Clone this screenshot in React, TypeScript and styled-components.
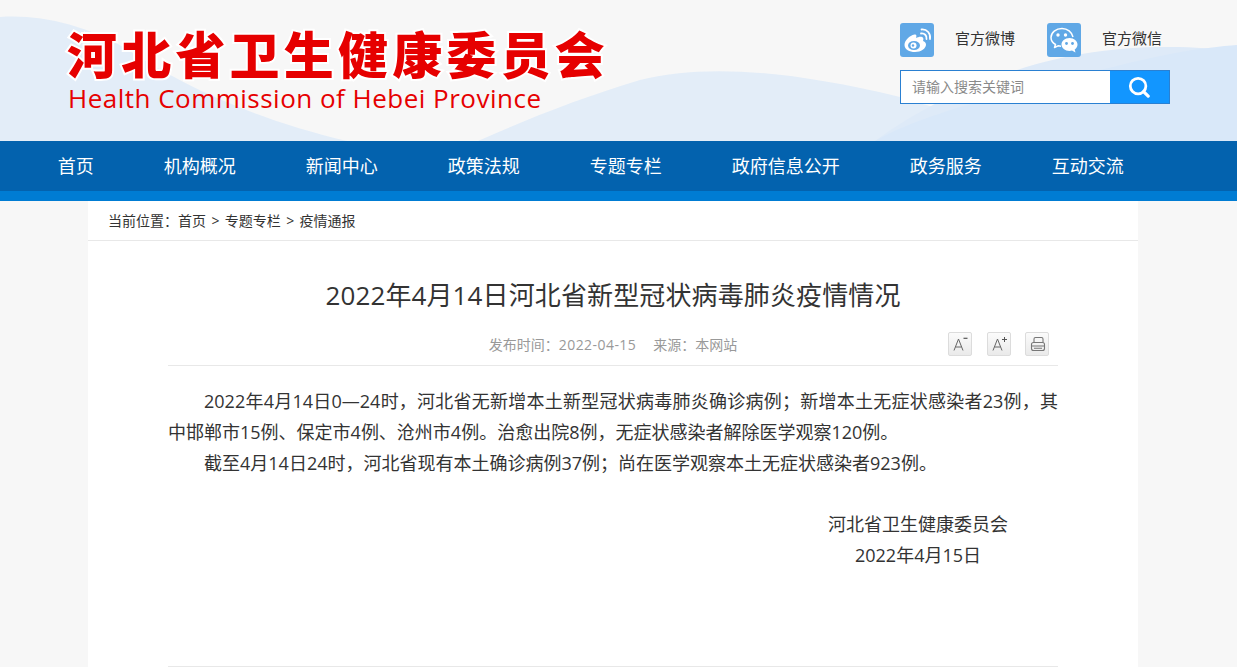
import React from "react";
import styled, { createGlobalStyle } from "styled-components";

const Global = createGlobalStyle`
  html, body { margin: 0; padding: 0; background: #f7f7f7; }
  body { font-family: "Open Sans", "Noto Sans CJK SC", "Liberation Sans", sans-serif; color: #333; }
  * { box-sizing: border-box; }
`;

const Page = styled.div`
  height: 667px;
  overflow: hidden;
  background: #f7f7f7;
`;

const Header = styled.header`
  position: relative;
  height: 141px;
  overflow: hidden;
  display: flex;
  justify-content: space-between;
  padding: 23px 67px 0 67px;
`;

const Waves = styled.svg`
  position: absolute;
  inset: 0;
  width: 1237px;
  height: 141px;
`;

const Brand = styled.div`
  position: relative;
  display: flex;
  flex-direction: column;
  align-items: flex-start;
`;

const BrandTitle = styled.div`
  font-family: "Noto Sans CJK SC", sans-serif;
  font-size: 50px;
  line-height: 58px;
  font-weight: 900;
  letter-spacing: 4.200px;
  color: #e60000;
  -webkit-text-stroke: 4px #fff;
  paint-order: stroke fill;
  white-space: nowrap;
`;

const BrandSub = styled.div`
  margin-left: 1px;
  font-size: 26px;
  line-height: 34px;
  letter-spacing: 0.490px;
  color: #e60000;
  white-space: nowrap;
`;

const Tools = styled.div`
  position: relative;
  width: 270px;
  display: flex;
  flex-direction: column;
  gap: 13px;
`;

const Socials = styled.div`
  display: flex;
  gap: 32px;
`;

const Social = styled.a`
  display: flex;
  align-items: center;
  gap: 21px;
  color: #333;
`;

const SocialLabel = styled.span`
  font-size: 15px;
  line-height: 20px;
  margin-bottom: 5px;
`;

const IconTile = styled.span`
  width: 34px;
  height: 34px;
  border-radius: 3px;
  background: #60a8e6;
  display: flex;
  align-items: center;
  justify-content: center;
`;

const Search = styled.form`
  display: flex;
  height: 34px;
  border: 1px solid #2a80d2;
  background: #fff;
`;

const SearchInput = styled.input`
  flex: 1;
  min-width: 0;
  border: 0;
  outline: 0;
  padding: 0 0 2px 11px;
  font: inherit;
  font-size: 14px;
  background: transparent;
  &::placeholder { color: #8a8a8a; opacity: 1; }
`;

const SearchButton = styled.button`
  width: 59px;
  border: 0;
  padding: 0 2px 0 0;
  background: #1296ff;
  display: flex;
  align-items: center;
  justify-content: center;
`;

const Nav = styled.nav`
  height: 60px;
  background: #0362ae;
  border-bottom: 10px solid #007cd3;
  display: flex;
  align-items: center;
  gap: 70px;
  padding: 0 0 2px 57.700px;
`;

const NavItem = styled.a`
  font-size: 18px;
  color: #fff;
  white-space: nowrap;
`;

const Main = styled.main`
  width: 1050px;
  margin-left: 88px;
  height: 466px;
  background: #fff;
`;

const Crumbs = styled.div`
  height: 40px;
  border-bottom: 1px solid #e8e8e8;
  padding: 0 0 1px 20px;
  display: flex;
  align-items: center;
  font-size: 14px;
  color: #333;
`;

const CrumbSep = styled.span`
  margin: 0 5.400px;
`;

const Article = styled.article`
  margin: 0 80px;
`;

const Title = styled.h1`
  margin: 0;
  padding-top: 35px;
  height: 73px;
  text-align: center;
  font-size: 26px;
  line-height: 38px;
  font-weight: 400;
  letter-spacing: 0.120px;
  color: #333;
`;

const Meta = styled.div`
  position: relative;
  height: 52px;
  padding-top: 20px;
  border-bottom: 1px solid #e8e8e8;
  display: flex;
  justify-content: center;
  gap: 17px;
  font-size: 14px;
  line-height: 22px;
  color: #999;
`;

const MetaDate = styled.span`
  letter-spacing: 0.450px;
`;

const MetaTools = styled.div`
  position: absolute;
  right: 9px;
  top: 18px;
  display: flex;
  gap: 14.500px;
`;

const ToolButton = styled.button`
  width: 24px;
  height: 24px;
  padding: 0;
  border: 1px solid #dcdcdc;
  border-radius: 2px;
  background: linear-gradient(#fbfbfb, #eaeaea);
  display: flex;
  align-items: center;
  justify-content: center;
`;

const Body = styled.div`
  padding-top: 20px;
  font-size: 18px;
  line-height: 31px;
  color: #333;
`;

const Para = styled.p`
  margin: 0;
  text-indent: 36px;
  text-align: justify;
`;

const Sign = styled.div`
  width: 180px;
  margin: 30px 50px 0 auto;
  text-align: center;
  white-space: nowrap;
`;

const FootRule = styled.div`
  margin-top: 95px;
  border-top: 1px solid #e8e8e8;
`;

const navItems = ["首页", "机构概况", "新闻中心", "政策法规", "专题专栏", "政府信息公开", "政务服务", "互动交流"];

export default function App() {
  return (
    <Page>
      <Global />
      <Header>
        <Waves viewBox="0 0 1237 141">
          <path d="M0 17 C40 14 85 25 125 48 C180 84 250 118 347 141 L0 141 Z" fill="#e3edf8" />
          <path d="M478 141 C530 118 580 98 640 80 C700 65 780 68 900 97 C960 118 1100 141 1237 141 Z" fill="#e3edf8" />
          <path d="M875 141 C920 108 970 85 1017 70 C1070 52 1130 46 1170 47 C1195 47 1215 49 1237 51 L1237 141 Z" fill="#deeaf8" />
          <path d="M875 141 C920 115 1000 95 1070 78 C1110 68 1170 50 1237 45 L1237 141 Z" fill="#d9e8f9" />
        </Waves>
        <Brand>
          <BrandTitle>河北省卫生健康委员会</BrandTitle>
          <BrandSub>Health Commission of Hebei Province</BrandSub>
        </Brand>
        <Tools>
          <Socials>
            <Social>
              <IconTile>
                <svg width="30" height="30" viewBox="0 0 30 30" fill="none">
                  <path d="M12.500 9.500C7.500 10.500 2.500 15.500 2.500 20C2.500 24.500 7.500 27 13 27C19 27 24 23.500 24 19.500C24 17.500 22.500 16.500 21 16C21.800 14 21.500 12.500 20 12C18 11.500 15.500 12.500 14 13C14.800 10.500 14.500 9 12.500 9.500Z" fill="#fff" />
                  <ellipse cx="12" cy="20.500" rx="6" ry="4.500" fill="#60a8e6" />
                  <circle cx="11.500" cy="20.500" r="3" fill="#fff" />
                  <circle cx="11" cy="20.500" r="1.200" fill="#60a8e6" />
                  <path d="M19 8.500C22.500 8 25 10.500 24.500 14M19.500 4.500C25 4 29 8.500 28 14" stroke="#fff" strokeWidth="1.800" strokeLinecap="round" />
                </svg>
              </IconTile>
              <SocialLabel>官方微博</SocialLabel>
            </Social>
            <Social>
              <IconTile>
                <svg width="30" height="30" viewBox="0 0 30 30" fill="none">
                  <path d="M13 3.500C7 3.500 2 7.500 2 12.500C2 15.500 3.800 18 6.500 19.500L5.500 22.500L9 20.800C10 21 11 21.200 12 21.200" stroke="#fff" strokeWidth="1.500" strokeLinejoin="round" />
                  <path d="M24 12C22.800 7.200 18.500 3.500 13 3.500" stroke="#fff" strokeWidth="1.500" />
                  <circle cx="9" cy="10" r="1.700" fill="#fff" />
                  <circle cx="16.500" cy="10" r="1.700" fill="#fff" />
                  <path d="M20.500 13C15.800 13 12.500 16 12.500 19.500C12.500 23 16 26 20.500 26C21.500 26 22.300 25.800 23 25.600L26.500 27.500L25.700 24.500C27.500 23.200 28.500 21.500 28.500 19.500C28.500 16 25 13 20.500 13Z" fill="#fff" />
                  <circle cx="17.500" cy="18.500" r="1.400" fill="#60a8e6" />
                  <circle cx="23.500" cy="18.500" r="1.400" fill="#60a8e6" />
                </svg>
              </IconTile>
              <SocialLabel>官方微信</SocialLabel>
            </Social>
          </Socials>
          <Search>
            <SearchInput placeholder="请输入搜索关键词" />
            <SearchButton type="button" aria-label="搜索">
              <svg width="22" height="22" viewBox="0 0 24 24" fill="none">
                <circle cx="11" cy="11" r="8.500" stroke="#fff" strokeWidth="3" />
                <path d="M17 17L22 22" stroke="#fff" strokeWidth="3.500" strokeLinecap="round" />
              </svg>
            </SearchButton>
          </Search>
        </Tools>
      </Header>
      <Nav>
        {navItems.map((n) => (
          <NavItem key={n}>{n}</NavItem>
        ))}
      </Nav>
      <Main>
        <Crumbs>
          <span>当前位置：</span>
          <span>首页</span>
          <CrumbSep>&gt;</CrumbSep>
          <span>专题专栏</span>
          <CrumbSep>&gt;</CrumbSep>
          <span>疫情通报</span>
        </Crumbs>
        <Article>
          <Title>2022年4月14日河北省新型冠状病毒肺炎疫情情况</Title>
          <Meta>
            <span>发布时间：<MetaDate>2022-04-15</MetaDate></span>
            <span>来源：本网站</span>
            <MetaTools>
              <ToolButton aria-label="缩小字号">
                <svg width="18" height="18" viewBox="0 0 18 18" fill="none" stroke="#666" strokeWidth="1">
                  <path d="M3 15.500L7.500 4L12 15.500M4.500 12H10.500" />
                  <path d="M12.500 3.300H16.500" stroke="#555" strokeWidth="1.200" />
                </svg>
              </ToolButton>
              <ToolButton aria-label="放大字号">
                <svg width="18" height="18" viewBox="0 0 18 18" fill="none" stroke="#666" strokeWidth="1">
                  <path d="M3 15.500L7.500 4L12 15.500M4.500 12H10.500" />
                  <path d="M12 4.500H17M14.500 2V7" stroke="#555" />
                </svg>
              </ToolButton>
              <ToolButton aria-label="打印">
                <svg width="18" height="18" viewBox="0 0 18 18" fill="none" stroke="#777" strokeWidth="1.100">
                  <path d="M6 7.500V4C6 3 6.500 2.500 7.500 2.500H13.500C14.500 2.500 15 3 15 4V7.500" />
                  <rect x="3.500" y="7.500" width="13" height="8" rx="2" />
                  <path d="M3.500 11H16.500M6 13.300H14" />
                </svg>
              </ToolButton>
            </MetaTools>
          </Meta>
          <Body>
            <Para>2022年4月14日0—24时，河北省无新增本土新型冠状病毒肺炎确诊病例；新增本土无症状感染者23例，其中邯郸市15例、保定市4例、沧州市4例。治愈出院8例，无症状感染者解除医学观察120例。</Para>
            <Para>截至4月14日24时，河北省现有本土确诊病例37例；尚在医学观察本土无症状感染者923例。</Para>
            <Sign>
              河北省卫生健康委员会
              <br />
              2022年4月15日
            </Sign>
            <FootRule />
          </Body>
        </Article>
      </Main>
    </Page>
  );
}
